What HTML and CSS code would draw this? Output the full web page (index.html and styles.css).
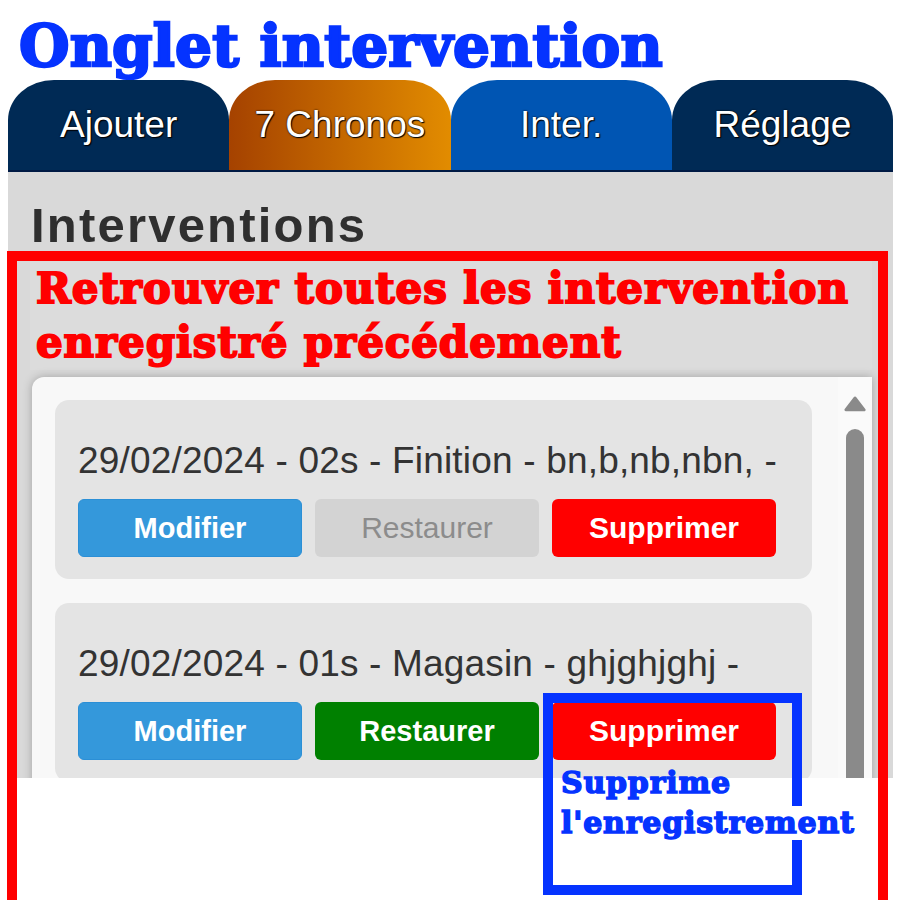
FILE: index.html
```html
<!DOCTYPE html>
<html lang="fr">
<head>
<meta charset="utf-8">
<title>Onglet intervention</title>
<link rel="stylesheet" href="styles.css">
</head>
<body>
<h1 class="title">Onglet intervention</h1>
<div class="app">
  <nav class="tabs">
    <div class="tab tab-add">Ajouter</div>
    <div class="tab tab-chrono">7 Chronos</div>
    <div class="tab tab-inter">Inter.</div>
    <div class="tab tab-settings">Réglage</div>
  </nav>
  <section class="panel">
    <h2 class="panel-title">Interventions</h2>
    <p class="note note-red">Retrouver toutes les intervention<br>enregistré précédement</p>
    <div class="list">
      <div class="cards">
        <div class="card">
          <p class="card-text">29/02/2024 - 02s - Finition - bn,b,nb,nbn, -</p>
          <div class="actions">
            <button class="btn btn-edit">Modifier</button>
            <button class="btn btn-restore-off">Restaurer</button>
            <button class="btn btn-delete">Supprimer</button>
          </div>
        </div>
        <div class="card">
          <p class="card-text">29/02/2024 - 01s - Magasin - ghjghjghj -</p>
          <div class="actions">
            <button class="btn btn-edit">Modifier</button>
            <button class="btn btn-restore">Restaurer</button>
            <button class="btn btn-delete">Supprimer</button>
          </div>
        </div>
      </div>
      <div class="scrollbar">
        <svg class="scroll-arrow" width="24" height="17" viewBox="0 0 24 17"><path d="M12 2 L22 15 L2 15 Z" fill="#8a8a8a" stroke="#8a8a8a" stroke-width="3" stroke-linejoin="round"/></svg>
        <span class="scroll-thumb"></span>
      </div>
    </div>
  </section>
</div>
<div class="frame frame-red"></div>
<div class="frame frame-blue"></div>
<p class="note note-blue">Supprime<br><span class="note-line">l'enregistrement</span></p>
</body>
</html>
```
FILE: styles.css
```css
html, body {
  margin: 0;
  padding: 0;
}
body {
  background: #ffffff;
  font-family: "Liberation Sans", Arial, sans-serif;
  position: relative;
  width: 900px;
  height: 900px;
  overflow: hidden;
}
.title {
  margin: 0;
  height: 68px;
  padding: 12px 0 0 19px;
  font-family: "DejaVu Serif", serif;
  font-weight: bold;
  font-size: 58px;
  line-height: 68px;
  letter-spacing: 0.2px;
  color: #0533ff;
  -webkit-text-stroke: 2.5px #0533ff;
  white-space: nowrap;
}
.app {
  margin-left: 8px;
  width: 885px;
  height: 698px;
  display: flex;
  flex-direction: column;
}
.tabs {
  display: flex;
  height: 90px;
  border-bottom: 2px solid #001a44;
  flex: none;
}
.tab {
  flex: 1;
  display: flex;
  align-items: center;
  justify-content: center;
  border-radius: 46px 46px 0 0 / 40px 40px 0 0;
  color: #ffffff;
  font-size: 37px;
  text-shadow: 0 0 2px #000, 1px 1px 1px #000;
}
.tab-add, .tab-settings {
  background: #002a55;
}
.tab-chrono {
  background: linear-gradient(90deg, #a54200, #e28c00);
}
.tab-inter {
  background: #0055b3;
}
.panel {
  flex: 1;
  background: #d9d9d9;
  overflow: hidden;
  padding: 0 21px 0 24px;
}
.panel-title {
  margin: 28px 0 0 -1px;
  font-size: 49px;
  line-height: 50px;
  font-weight: bold;
  letter-spacing: 2.2px;
  color: #2f2f2f;
}
.note {
  font-family: "DejaVu Serif", serif;
  font-weight: bold;
  white-space: nowrap;
}
.note-red {
  margin: 11px 0 0 -2px;
  width: 836px;
  height: 108px;
  padding: 1px 0 0 6px;
  background: #dcdcdc;
  color: #ff0000;
  font-size: 42px;
  line-height: 54px;
  letter-spacing: 0.9px;
  -webkit-text-stroke: 2px #ff0000;
}
.list {
  margin-top: 7px;
  width: 840px;
  height: 420px;
  display: flex;
  background: #f8f8f8;
  border-radius: 12px 0 0 0;
  box-shadow: 0 0 10px rgba(0, 0, 0, 0.25);
}
.cards {
  flex: 1;
  padding: 23px 26px 0 23px;
}
.card {
  background: #e4e4e4;
  border-radius: 14px;
  padding: 40px 23px 22px;
  margin-bottom: 24px;
}
.card-text {
  margin: 0;
  font-size: 37px;
  line-height: 42px;
  letter-spacing: 0.18px;
  color: #333333;
  white-space: nowrap;
}
.actions {
  margin-top: 17px;
  display: flex;
  gap: 13px;
}
.btn {
  width: 224px;
  height: 58px;
  border: 0;
  border-radius: 6px;
  font-family: "Liberation Sans", Arial, sans-serif;
  font-size: 29px;
  font-weight: bold;
  color: #ffffff;
  padding: 0;
}
.btn-edit {
  background: #3498db;
  border: 1px solid #2b8fd6;
}
.btn-restore-off {
  background: #d3d3d3;
  color: #8c8c8c;
  font-weight: normal;
  font-size: 30px;
}
.btn-restore {
  background: #008000;
}
.btn-delete {
  background: #ff0000;
  font-size: 30px;
}
.scrollbar {
  width: 34px;
  flex: none;
  display: flex;
  flex-direction: column;
  align-items: center;
  padding-top: 19px;
  background: #fafafa;
}
.scroll-arrow {
  display: block;
}
.scroll-thumb {
  display: block;
  margin-top: 17px;
  width: 18px;
  height: 400px;
  border-radius: 9px 9px 0 0;
  background: #8a8a8a;
}
.frame {
  position: absolute;
  box-sizing: border-box;
}
.frame-red {
  left: 7px;
  top: 251px;
  width: 881px;
  height: 700px;
  border: 10px solid #ff0000;
}
.frame-blue {
  left: 543px;
  top: 693px;
  width: 259px;
  height: 202px;
  border: 10px solid #0533ff;
}
.note-blue {
  position: absolute;
  left: 561px;
  top: 763px;
  margin: 0;
  color: #0533ff;
  font-size: 30px;
  line-height: 40px;
  letter-spacing: 0.8px;
  -webkit-text-stroke: 1.5px #0533ff;
}
.note-line {
  display: inline-block;
  background: #ffffff;
  line-height: 34px;
}
```
